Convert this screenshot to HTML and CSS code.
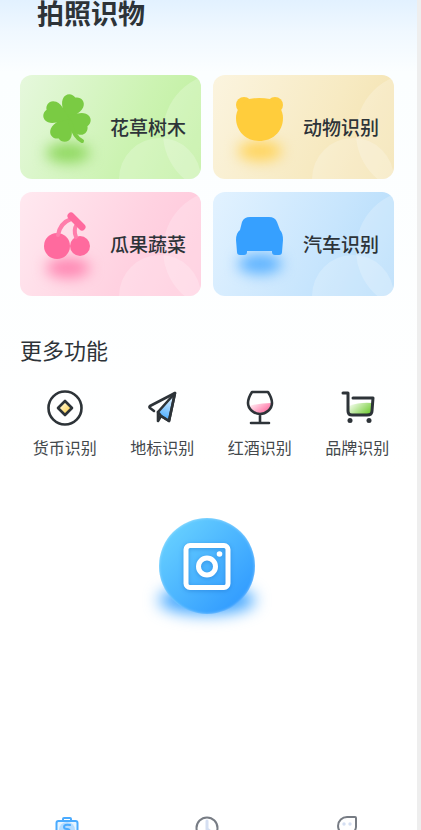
FILE: index.html
```html
<!DOCTYPE html>
<html lang="zh-CN">
<head>
    <meta charset="UTF-8">
    <meta name="viewport" content="width=device-width, initial-scale=1.0">
    <title>拍照识物</title>
    <link rel="stylesheet" href="styles.css">
</head>
<body>
    <div class="screen">
        <header>
            <h1>拍照识物</h1>
        </header>

        <main>
            <div class="cards">
                <a class="card card-green" href="#">
                    <svg class="card-icon" viewBox="0 0 76 104" aria-hidden="true">
                        <ellipse class="shadow" cx="38" cy="78" rx="22" ry="10" fill="#8fd85f"/>
                        <g class="shape" fill="#7acb43">
                            <g transform="translate(37 43)">
                                <path transform="rotate(22)" d="M0 4C-3 -3 -11 -9 -11 -16C-11 -23 -4 -25 0 -22C4 -25 11 -23 11 -16C11 -9 3 -3 0 4Z"/>
                                <path transform="rotate(112)" d="M0 4C-3 -3 -11 -9 -11 -16C-11 -23 -4 -25 0 -22C4 -25 11 -23 11 -16C11 -9 3 -3 0 4Z"/>
                                <path transform="rotate(202)" d="M0 4C-3 -3 -11 -9 -11 -16C-11 -23 -4 -25 0 -22C4 -25 11 -23 11 -16C11 -9 3 -3 0 4Z"/>
                                <path transform="rotate(292)" d="M0 4C-3 -3 -11 -9 -11 -16C-11 -23 -4 -25 0 -22C4 -25 11 -23 11 -16C11 -9 3 -3 0 4Z"/>
                            </g>
                            <path d="M40 47Q44 62 52 66" fill="none" stroke="#7acb43" stroke-width="4" stroke-linecap="round"/>
                        </g>
                    </svg>
                    <span>花草树木</span>
                </a>
                <a class="card card-yellow" href="#">
                    <svg class="card-icon" viewBox="0 0 76 104" aria-hidden="true">
                        <ellipse class="shadow" cx="37" cy="76" rx="22" ry="10" fill="#ffd45c"/>
                        <g class="shape" fill="#ffcd3c">
                            <circle cx="21" cy="30" r="8"/>
                            <circle cx="52" cy="30" r="8"/>
                            <path d="M26 24Q36 22 47 24C56 28 60 36 60 43C60 57 49 66 36 66C24 66 13 57 13 43C13 36 17 28 26 24Z"/>
                        </g>
                    </svg>
                    <span>动物识别</span>
                </a>
                <a class="card card-pink" href="#">
                    <svg class="card-icon" viewBox="0 0 76 104" aria-hidden="true">
                        <ellipse class="shadow" cx="38" cy="76" rx="22" ry="10" fill="#ff86b2"/>
                        <g class="shape" fill="#ff6a9e">
                            <circle cx="27" cy="54" r="13"/>
                            <circle cx="50" cy="54" r="10"/>
                            <g fill="none" stroke="#ff7dab" stroke-linecap="round">
                                <path d="M28 43Q30 31 41 27M46 45Q43 38 47 32" stroke-width="4"/>
                                <path d="M41 24L52 35" stroke-width="7" stroke="#ff6a9e"/>
                            </g>
                        </g>
                    </svg>
                    <span>瓜果蔬菜</span>
                </a>
                <a class="card card-blue" href="#">
                    <svg class="card-icon" viewBox="0 0 76 104" aria-hidden="true">
                        <ellipse class="shadow" cx="37" cy="72" rx="22" ry="10" fill="#5cb2ff"/>
                        <path class="shape" fill="#36a0ff" d="M27 25H46Q52 25 54 30L57 38Q60 41 60 48L59 60Q59 63 56 63H52Q49 63 49 60V59H24V60Q24 63 21 63H17Q14 63 14 60L13 48Q13 41 17 38L19 30Q21 25 27 25Z"/>
                    </svg>
                    <span>汽车识别</span>
                </a>
            </div>

            <h2>更多功能</h2>
            <div class="features">
                <a class="feature" href="#">
                    <svg viewBox="0 0 36 36" aria-hidden="true">
                        <defs>
                            <linearGradient id="gold" x1="0" y1="0" x2="1" y2="1">
                                <stop offset="0.2" stop-color="#fff6d4"/>
                                <stop offset="1" stop-color="#ffc928"/>
                            </linearGradient>
                        </defs>
                        <circle cx="18" cy="18" r="16.5"/>
                        <path d="M18 11L25 18L18 25L11 18Z" fill="url(#gold)"/>
                    </svg>
                    <span>货币识别</span>
                </a>
                <a class="feature" href="#">
                    <svg viewBox="0 0 36 36" aria-hidden="true">
                        <defs>
                            <linearGradient id="sky" x1="0.7" y1="0" x2="0.5" y2="1">
                                <stop offset="0.1" stop-color="#e5f4ff"/>
                                <stop offset="1" stop-color="#45aaff"/>
                            </linearGradient>
                        </defs>
                        <path d="M31 3L14 22L17 26L25 31Z" fill="url(#sky)"/>
                        <path d="M10 21L6 18Q5 17 6 16L31 3L25 31L17 26L14 31V22"/>
                    </svg>
                    <span>地标识别</span>
                </a>
                <a class="feature" href="#">
                    <svg viewBox="0 0 36 36" aria-hidden="true">
                        <defs>
                            <linearGradient id="wine" x1="0" y1="0" x2="1" y2="0.6">
                                <stop offset="0.1" stop-color="#fff0f5"/>
                                <stop offset="1" stop-color="#ff6fa3"/>
                            </linearGradient>
                        </defs>
                        <path d="M7 16Q17 13 29 13C29 19 24 23 18 23C13 23 9 21 7 16Z" fill="url(#wine)" stroke="none"/>
                        <path d="M10 2H26Q30 8 30 13C30 19 24 24 18 24C12 24 6 19 6 13Q6 8 10 2ZM18 24V33M9 33H27"/>
                    </svg>
                    <span>红酒识别</span>
                </a>
                <a class="feature" href="#">
                    <svg viewBox="0 0 36 36" aria-hidden="true">
                        <defs>
                            <linearGradient id="lime" x1="0" y1="0" x2="1" y2="0.6">
                                <stop offset="0.1" stop-color="#f0fbe8"/>
                                <stop offset="1" stop-color="#78ce3e"/>
                            </linearGradient>
                        </defs>
                        <path d="M10 16Q20 12 33 13V22L30 25H14Q10 25 10 22Z" fill="url(#lime)" stroke="none"/>
                        <path d="M4 3H9V21Q9 25 13 25H28Q33 25 33 21L34 8H14" stroke-width="3"/>
                        <circle class="wheel" cx="11" cy="30.5" r="2.5"/>
                        <circle class="wheel" cx="30" cy="30.5" r="2.5"/>
                    </svg>
                    <span>品牌识别</span>
                </a>
            </div>

            <button class="shoot" type="button" aria-label="拍照">
                <svg viewBox="0 0 48 48" aria-hidden="true">
                    <rect x="3" y="3.5" width="42" height="42" rx="4"/>
                    <circle cx="24" cy="24.5" r="8.5"/>
                    <circle class="lamp" cx="36.5" cy="12" r="2.8"/>
                </svg>
            </button>
        </main>

        <nav class="tabs">
            <a href="#" aria-label="识别">
                <svg viewBox="0 0 24 24" aria-hidden="true">
                    <rect x="1.5" y="5" width="21" height="18" rx="2" fill="#e6f4ff" stroke="#4aabff"/>
                    <path d="M8 5V3Q8 2 9 2H15Q16 2 16 3V5" stroke="#4aabff"/>
                    <circle cx="12" cy="14" r="8" fill="#b5dcff"/>
                    <path d="M15 9Q9 8 9 11Q9 13 12 13Q15 13 15 16" stroke="#4aabff"/>
                </svg>
            </a>
            <a href="#" aria-label="历史">
                <svg viewBox="0 0 24 24" aria-hidden="true">
                    <circle cx="12" cy="12" r="10.5" stroke="#777c84"/>
                    <path d="M12 5V13L16 16" stroke="#d5dff2" stroke-width="3"/>
                </svg>
            </a>
            <a href="#" aria-label="我的">
                <svg viewBox="0 0 24 24" aria-hidden="true">
                    <path d="M12 1H20Q21 1 21 2V11A9 9 0 1 1 12 1Z" stroke="#777c84"/>
                    <circle cx="9" cy="8" r="1.7" fill="#d5dff2"/>
                    <circle cx="15" cy="8" r="1.7" fill="#d5dff2"/>
                </svg>
            </a>
        </nav>
    </div>
</body>
</html>
```
FILE: styles.css
```css
* {
    box-sizing: border-box;
}

body {
    margin: 0;
    padding-right: 4px;
    height: 100vh;
    overflow: hidden;
    background-color: #eeeeee;
    font-family: "Noto Sans CJK SC", sans-serif;
    color: #2d3338;
}

a {
    color: inherit;
    text-decoration: none;
}

.screen {
    display: flex;
    flex-direction: column;
    height: 100%;
    background: linear-gradient(#e2f1ff 0, #f0f8ff 32px, #fbfeff 72px, #ffffff 480px);
}

header {
    padding: 0 37px;
}

h1 {
    margin: 0;
    font-size: 27px;
    line-height: 25px;
    font-weight: bold;
}

main {
    flex: 1;
    padding: 50px 23px 0 20px;
}

.cards {
    display: grid;
    grid-template-columns: 1fr 1fr;
    gap: 13px 12px;
}

.card {
    position: relative;
    display: flex;
    align-items: center;
    justify-content: space-between;
    height: 104px;
    padding: 0 15px 0 10px;
    border-radius: 12px;
    overflow: hidden;
    font-size: 19px;
    font-weight: 500;
    white-space: nowrap;
}

/* pale circles in the corner */
.card::before,
.card::after {
    content: "";
    position: absolute;
    border-radius: 50%;
    background-color: rgba(255, 255, 255, 0.22);
}

.card::before {
    width: 120px;
    height: 120px;
    right: -82px;
    top: -2px;
}

.card::after {
    width: 82px;
    height: 82px;
    right: 0;
    bottom: -41px;
}

.card span {
    position: relative;
    z-index: 1;
    padding-bottom: 2px;
}

.card-green {
    background: linear-gradient(115deg, #e6f8dd, #ccf3b2 60%, #bdef9b);
}

.card-yellow {
    background: linear-gradient(115deg, #fbf4df, #f7eac2 60%, #f3e1ac);
}

.card-pink {
    background: linear-gradient(115deg, #ffe9f0, #ffd2e1 60%, #ffc6da);
}

.card-blue {
    background: linear-gradient(115deg, #e2f2ff, #c7e5fd 60%, #b2dbfa);
}

.card-icon {
    width: 76px;
    height: 104px;
}

.shadow {
    filter: blur(7px);
}

.shape {
    filter: blur(0.7px);
}

h2 {
    margin: 37px 0 0;
    font-size: 22px;
    line-height: 32px;
    font-weight: normal;
}

.features {
    display: grid;
    grid-template-columns: repeat(4, 1fr);
    margin: 25px -12px 0 -4px;
}

.feature {
    display: flex;
    flex-direction: column;
    align-items: center;
    gap: 9px;
    font-size: 16px;
    line-height: 24px;
    color: #43484c;
}

.feature svg {
    width: 36px;
    height: 36px;
    fill: none;
    stroke: #2d3338;
    stroke-width: 2.6;
    stroke-linecap: round;
    stroke-linejoin: round;
}

.feature .wheel {
    fill: #2d3338;
    stroke: none;
}

.shoot {
    position: relative;
    isolation: isolate;
    display: flex;
    align-items: center;
    justify-content: center;
    width: 96px;
    height: 96px;
    margin: 59px auto 0;
    padding: 0;
    border: none;
    background: none;
    cursor: pointer;
}

.shoot::before,
.shoot::after {
    content: "";
    position: absolute;
    z-index: -1;
    border-radius: 50%;
}

.shoot::before {
    left: 0;
    right: 0;
    bottom: 0;
    height: 28px;
    background-color: #3ba3ff;
    filter: blur(8px);
}

.shoot::after {
    inset: 0;
    background: linear-gradient(135deg, #64cdff 15%, #339dff 85%);
    box-shadow: inset 0 0 3px rgba(255, 255, 255, 0.5);
}

.shoot svg {
    width: 48px;
    height: 48px;
    fill: none;
    stroke: #ffffff;
    stroke-width: 5;
    filter: drop-shadow(0 1px 2px rgba(20, 100, 190, 0.4));
}

.shoot .lamp {
    fill: #ffffff;
    stroke: none;
}

.tabs {
    display: flex;
    justify-content: space-between;
    height: 14px;
    padding: 0 58px 0 55px;
}

.tabs svg {
    display: block;
    width: 24px;
    height: 24px;
    fill: none;
    stroke-width: 2;
    stroke-linecap: round;
}
```
